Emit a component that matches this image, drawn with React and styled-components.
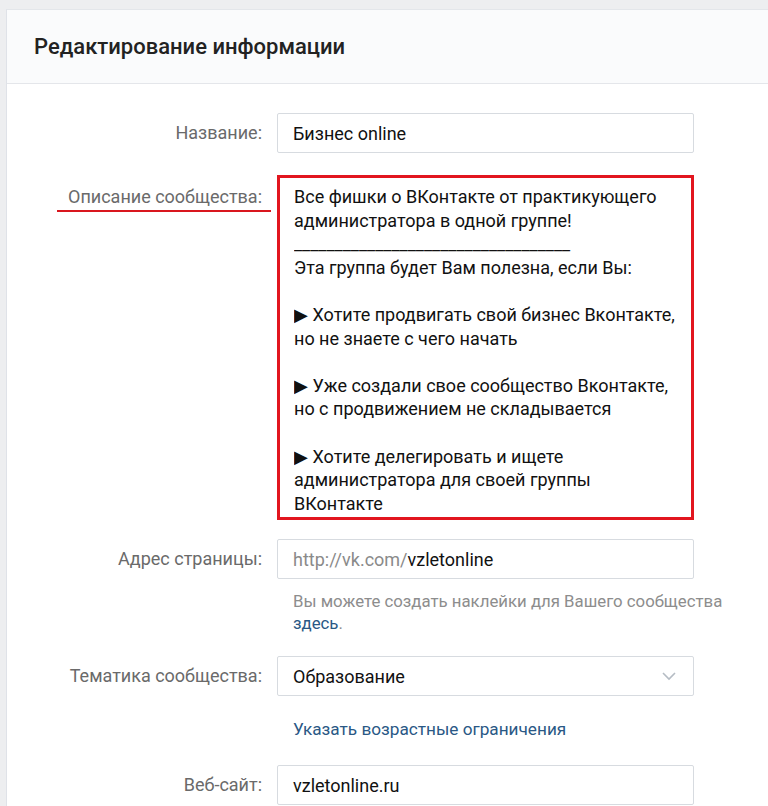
import React from "react";
import styled, { createGlobalStyle } from "styled-components";

const Global = createGlobalStyle`
  html, body { margin: 0; padding: 0; background: #edeef0; overflow: hidden; }
  body { font-family: Roboto, "Open Sans", "Liberation Sans", sans-serif; }
`;

const Page = styled.div`
  padding: 9px 0 0 6px;
  width: 768px;
  height: 806px;
  box-sizing: border-box;
  overflow: hidden;
`;

const Card = styled.section`
  background: #fff;
  border-left: 1px solid #dfe2e8;
  border-top: 1px solid #e3e6ea;
  height: 100%;
`;

const Header = styled.header`
  height: 73px;
  display: flex;
  align-items: center;
  padding-left: 27px;
  background: #fafbfc;
  border-bottom: 1px solid #e4e6ea;
`;

const Title = styled.h1`
  margin: 0;
  font-size: 22px;
  font-weight: 500;
  color: #222;
`;

const Form = styled.div`
  display: flex;
  flex-direction: column;
  padding-top: 29px;
`;

const Row = styled.div`
  display: grid;
  grid-template-columns: 255px 417px;
  column-gap: 15px;
  margin-top: ${(p) => p.$mt || 0}px;
`;

const Label = styled.div`
  text-align: right;
  font-size: 18px;
  color: #6a6a6a;
  line-height: 22px;
  padding-top: ${(p) => p.$pt || 9}px;
  align-self: start;
  white-space: nowrap;
`;

const Marked = styled.span`
  position: relative;
  &::after {
    content: "";
    position: absolute;
    left: -11px;
    right: -9px;
    bottom: -5px;
    height: 2px;
    background: #d9161e;
  }
`;

const Input = styled.div`
  grid-column: 2;
  height: 40px;
  box-sizing: border-box;
  border: 1px solid #d7dbe0;
  border-radius: 2px;
  display: flex;
  align-items: center;
  padding: 0 15px;
  font-size: 18px;
  color: #111;
  position: relative;
`;

const Muted = styled.span`
  color: #8a8a8a;
`;

const Desc = styled.div`
  grid-column: 2;
  height: 345px;
  box-sizing: border-box;
  border: 3px solid #e2161f;
  padding: 7px 14px 0 14px;
  font-size: 18px;
  line-height: 23.6px;
  color: #111;
`;

const DescScroll = styled.div`
  height: 325px;
  overflow: hidden;
`;

const Line = styled.div`
  white-space: nowrap;
  min-height: 23.6px;
`;

const Hint = styled.div`
  grid-column: 2;
  padding-left: 16px;
  font-size: 16.8px;
  line-height: 22px;
  color: #8d8d8d;
  white-space: nowrap;
`;

const Link = styled.a`
  color: #2a5885;
  text-decoration: none;
  cursor: pointer;
`;

const LinkLine = styled.div`
  grid-column: 2;
  padding-left: 16px;
  font-size: 17.2px;
  line-height: 22px;
`;

const Chevron = styled.svg`
  position: absolute;
  right: 17px;
  top: 15px;
`;

export default function App() {
  return (
    <>
      <Global />
      <Page>
        <Card>
          <Header>
            <Title>Редактирование информации</Title>
          </Header>
          <Form>
            <Row>
              <Label>Название:</Label>
              <Input>Бизнес online</Input>
            </Row>
            <Row $mt={22}>
              <Label $pt={11}>
                <Marked>Описание сообщества:</Marked>
              </Label>
              <Desc>
                <DescScroll>
                  <Line>Все фишки о ВКонтакте от практикующего</Line>
                  <Line>администратора в одной группе!</Line>
                  <Line>__________________________________</Line>
                  <Line>Эта группа будет Вам полезна, если Вы:</Line>
                  <Line />
                  <Line>▶ Хотите продвигать свой бизнес Вконтакте,</Line>
                  <Line>но не знаете с чего начать</Line>
                  <Line />
                  <Line>▶ Уже создали свое сообщество Вконтакте,</Line>
                  <Line>но с продвижением не складывается</Line>
                  <Line />
                  <Line>▶ Хотите делегировать и ищете</Line>
                  <Line>администратора для своей группы</Line>
                  <Line>ВКонтакте</Line>
                </DescScroll>
              </Desc>
            </Row>
            <Row $mt={19}>
              <Label>Адрес страницы:</Label>
              <Input>
                <Muted>http://vk.com/</Muted>vzletonline
              </Input>
            </Row>
            <Row $mt={11}>
              <Hint>
                Вы можете создать наклейки для Вашего сообщества
                <br />
                <Link>здесь</Link>.
              </Hint>
            </Row>
            <Row $mt={22}>
              <Label>Тематика сообщества:</Label>
              <Input>
                Образование
                <Chevron width="14" height="9" viewBox="0 0 14 9">
                  <polyline points="1,1 7,7 13,1" fill="none" stroke="#b5bcc4" strokeWidth="1.6" />
                </Chevron>
              </Input>
            </Row>
            <Row $mt={22}>
              <LinkLine>
                <Link>Указать возрастные ограничения</Link>
              </LinkLine>
            </Row>
            <Row $mt={25}>
              <Label>Веб-сайт:</Label>
              <Input>vzletonline.ru</Input>
            </Row>
          </Form>
        </Card>
      </Page>
    </>
  );
}
